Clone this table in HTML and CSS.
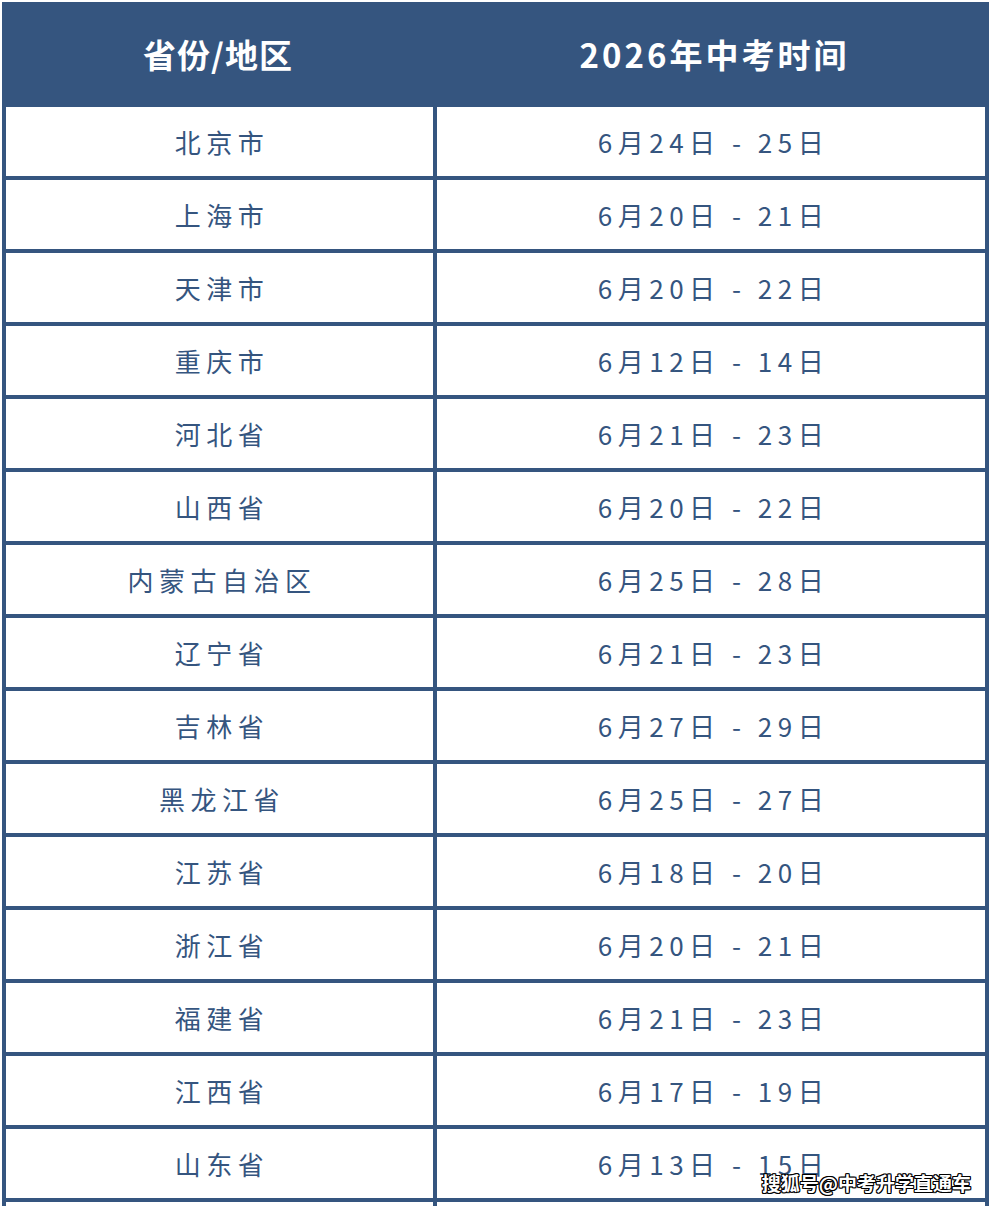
FILE: index.html
```html
<!DOCTYPE html>
<html lang="zh-CN">
<head>
<meta charset="utf-8">
<title>2026年中考时间</title>
<link rel="stylesheet" href="styles.css">
</head>
<body>
<div class="page">
<table class="sheet">
  <colgroup><col class="c1"><col class="c2"></colgroup>
  <thead>
    <tr><th class="col-a">省份/地区</th><th class="col-b">2026年中考时间</th></tr>
  </thead>
  <tbody>
    <tr><td>北京市</td><td>6月24日 - 25日</td></tr>
    <tr><td>上海市</td><td>6月20日 - 21日</td></tr>
    <tr><td>天津市</td><td>6月20日 - 22日</td></tr>
    <tr><td>重庆市</td><td>6月12日 - 14日</td></tr>
    <tr><td>河北省</td><td>6月21日 - 23日</td></tr>
    <tr><td>山西省</td><td>6月20日 - 22日</td></tr>
    <tr><td>内蒙古自治区</td><td>6月25日 - 28日</td></tr>
    <tr><td>辽宁省</td><td>6月21日 - 23日</td></tr>
    <tr><td>吉林省</td><td>6月27日 - 29日</td></tr>
    <tr><td>黑龙江省</td><td>6月25日 - 27日</td></tr>
    <tr><td>江苏省</td><td>6月18日 - 20日</td></tr>
    <tr><td>浙江省</td><td>6月20日 - 21日</td></tr>
    <tr><td>福建省</td><td>6月21日 - 23日</td></tr>
    <tr><td>江西省</td><td>6月17日 - 19日</td></tr>
    <tr><td>山东省</td><td>6月13日 - 15日</td></tr>
    <tr><td></td><td></td></tr>
  </tbody>
</table>
<div class="mark">搜狐号@中考升学直通车</div>
</div>
</body>
</html>
```
FILE: styles.css
```css
html, body {
  margin: 0;
  padding: 0;
  background: #ffffff;
}
.page {
  position: relative;
  width: 992px;
  height: 1206px;
  overflow: hidden;
  font-family: "Noto Sans CJK SC", "Noto Sans", sans-serif;
}
.sheet {
  margin: 2px 0 0 2px;
  border-collapse: separate;
  border-spacing: 0;
  border-left: 4px solid #35557f;
  table-layout: fixed;
  width: 987px;
}
.sheet col.c1 { width: 431px; }
.sheet col.c2 { width: 552px; }
.sheet th, .sheet td {
  box-sizing: border-box;
}
.sheet th {
  background: #35557f;
  color: #ffffff;
  height: 105px;
  padding: 0 0 0 3px;
  font-size: 33px;
  font-weight: 700;
  letter-spacing: 3px;
  text-align: center;
  vertical-align: middle;
  line-height: 1;
}
.sheet th.col-a {
  letter-spacing: 1px;
  padding: 0 7px 0 0;
}
.sheet td {
  height: 73px;
  padding: 0 0 0 5px;
  border-right: 4px solid #35557f;
  border-bottom: 4px solid #35557f;
  color: #35557f;
  font-size: 26px;
  font-weight: 400;
  letter-spacing: 5.5px;
  text-align: center;
  vertical-align: middle;
  line-height: 1;
}
.mark {
  position: absolute;
  right: 21px;
  top: 1172px;
  font-size: 19px;
  font-weight: 700;
  color: #ffffff;
  line-height: 1.2;
  letter-spacing: 0;
  text-shadow: 1px 1px 0 #000, -1px -1px 0 #000, 1px -1px 0 #000, -1px 1px 0 #000, 1px 0 0 #000, -1px 0 0 #000, 0 1px 0 #000, 0 -1px 0 #000;
}
```
